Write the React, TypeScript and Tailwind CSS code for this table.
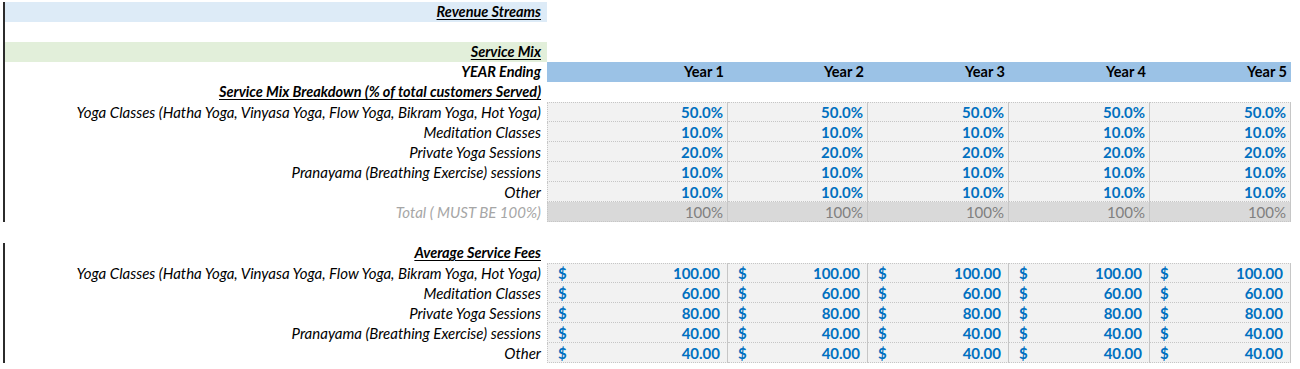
import type { ReactNode } from 'react'

const COLS = ['w-[181px]', 'w-[140px]', 'w-[141px]', 'w-[141px]', 'w-[141px]']
const YEARS = ['Year 1', 'Year 2', 'Year 3', 'Year 4', 'Year 5']

const mix = [
  { label: 'Yoga Classes (Hatha Yoga, Vinyasa Yoga, Flow Yoga, Bikram Yoga, Hot Yoga)', value: '50.0%' },
  { label: 'Meditation Classes', value: '10.0%' },
  { label: 'Private Yoga Sessions', value: '20.0%' },
  { label: 'Pranayama (Breathing Exercise) sessions', value: '10.0%' },
  { label: 'Other', value: '10.0%' },
]

const fees = [
  { label: 'Yoga Classes (Hatha Yoga, Vinyasa Yoga, Flow Yoga, Bikram Yoga, Hot Yoga)', value: '100.00' },
  { label: 'Meditation Classes', value: '60.00' },
  { label: 'Private Yoga Sessions', value: '80.00' },
  { label: 'Pranayama (Breathing Exercise) sessions', value: '40.00' },
  { label: 'Other', value: '40.00' },
]

type RowProps = {
  label?: ReactNode
  /** extra classes for the label cell (band colour, text style) */
  labelClass?: string
  edge?: boolean
  children?: ReactNode
}

function Row({ label, labelClass = '', edge = true, children }: RowProps) {
  return (
    <div className="flex h-5">
      <div className="w-[3px] shrink-0" />
      <div
        className={`flex w-[544px] shrink-0 items-center justify-end pr-[6px] ${
          edge ? 'border-l-2 border-[#2b2b2b]' : ''
        } ${labelClass}`}
      >
        {label}
      </div>
      {children}
    </div>
  )
}

function cellBorders(i: number, first: boolean) {
  return `border-r border-b border-[#c6c6c6] [border-bottom-style:dotted] ${
    i === 0 ? 'border-l [border-left-style:dotted]' : ''
  } ${first ? 'border-t [border-top-style:dotted]' : ''}`
}

const heading = 'text-[14.5px] font-bold italic underline underline-offset-2'

export default function App() {
  return (
    <div className="h-[369px] w-[1300px] overflow-hidden bg-white pt-[2px] font-[Lato,'Liberation_Sans',sans-serif] text-[15px] leading-5 text-black">
      <Row label={<span className={heading}>Revenue Streams</span>} labelClass="bg-[#ddebf7]" />
      <Row />
      <Row label={<span className={heading}>Service Mix</span>} labelClass="bg-[#e2efda]" />
      <Row label={<span className="text-[14.5px] font-bold italic">YEAR Ending</span>}>
        {YEARS.map((y, i) => (
          <div
            key={y}
            className={`${COLS[i]} flex items-center justify-end bg-[#9bc2e6] pr-[4px] text-[14.5px] font-bold`}
          >
            {y}
          </div>
        ))}
      </Row>
      <Row label={<span className={heading}>Service Mix Breakdown (% of total customers Served)</span>} />
      {mix.map((m, r) => (
        <Row key={m.label} label={<span className="italic">{m.label}</span>}>
          {COLS.map((w, i) => (
            <div
              key={i}
              className={`${w} flex items-center justify-end bg-[#f2f2f2] pr-[4px] font-bold text-[#0070c0] ${cellBorders(i, r === 0)}`}
            >
              {m.value}
            </div>
          ))}
        </Row>
      ))}
      <Row label={<span className="italic text-[#a6a6a6]">Total ( MUST BE 100%)</span>}>
        {COLS.map((w, i) => (
          <div
            key={i}
            className={`${w} flex items-center justify-end bg-[#d9d9d9] pr-[4px] text-[#808080] ${cellBorders(i, false)}`}
          >
            100%
          </div>
        ))}
      </Row>
      <div className="h-[21px]" />
      <Row label={<span className={heading}>Average Service Fees</span>} />
      {fees.map((f, r) => (
        <Row key={f.label} label={<span className="italic">{f.label}</span>}>
          {COLS.map((w, i) => (
            <div
              key={i}
              className={`${w} flex items-center justify-between bg-[#f2f2f2] pl-[10px] pr-[7px] font-bold text-[#0070c0] ${cellBorders(i, r === 0)}`}
            >
              <span>$</span>
              <span>{f.value}</span>
            </div>
          ))}
        </Row>
      ))}
    </div>
  )
}
